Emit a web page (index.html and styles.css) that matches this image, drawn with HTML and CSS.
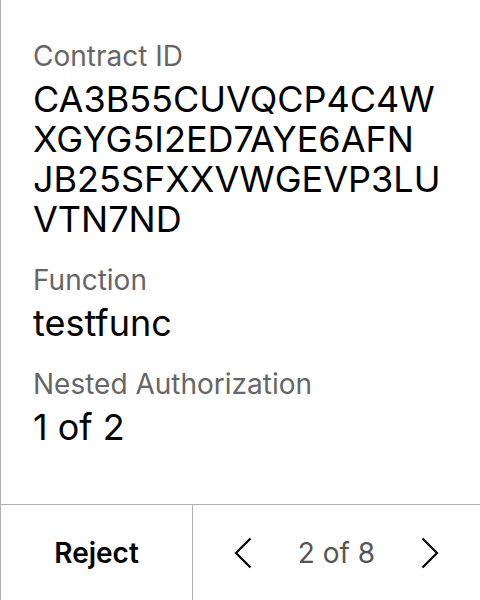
FILE: index.html
```html
<!DOCTYPE html>
<html>
<head>
<meta charset="utf-8">
<link rel="stylesheet" href="styles.css">
</head>
<body>
<div class="page">
  <div class="content">
    <div class="field">
      <div class="label">Contract ID</div>
      <div class="value">CA3B55CUVQCP4C4W XGYG5I2ED7AYE6AFN JB25SFXXVWGEVP3LU VTN7ND</div>
    </div>
    <div class="field">
      <div class="label">Function</div>
      <div class="value">testfunc</div>
    </div>
    <div class="field">
      <div class="label">Nested Authorization</div>
      <div class="value">1 of 2</div>
    </div>
  </div>
  <div class="footer">
    <div class="reject">Reject</div>
    <div class="pager">
      <svg class="chev" width="18" height="32" viewBox="0 0 18 32"><path d="M16.5 1.5 L2 16 L16.5 30.5" fill="none" stroke="#000" stroke-width="2.2"/></svg>
      <span class="count">2 of 8</span>
      <svg class="chev" width="18" height="32" viewBox="0 0 18 32"><path d="M1.5 1.5 L16 16 L1.5 30.5" fill="none" stroke="#000" stroke-width="2.2"/></svg>
    </div>
  </div>
</div>
</body>
</html>
```
FILE: styles.css
```css
html, body {
  margin: 0;
  padding: 0;
  background: #fff;
}
body {
  font-family: Inter, "Noto Sans", sans-serif;
  color: #000;
}
.page {
  width: 479px;
  height: 600px;
  border-left: 1px solid #b0b0b0;
  display: flex;
  flex-direction: column;
}
.content {
  flex: 1;
  padding: 39px 20px 0 32px;
  display: flex;
  flex-direction: column;
  gap: 24px;
}
.field {
  display: flex;
  flex-direction: column;
  gap: 6px;
}
.label {
  font-size: 28px;
  line-height: 34px;
  color: #666;
}
.value {
  font-size: 36px;
  line-height: 40px;
  width: 420px;
}
.footer {
  height: 95px;
  border-top: 1px solid #b0b0b0;
  display: flex;
}
.reject {
  width: 191px;
  border-right: 1px solid #b0b0b0;
  display: flex;
  align-items: center;
  justify-content: center;
  font-size: 28px;
  font-weight: 600;
}
.pager {
  flex: 1;
  display: flex;
  align-items: center;
  justify-content: center;
  gap: 46px;
}
.count {
  font-size: 28px;
  color: #555;
}
.chev {
  display: block;
}
```
